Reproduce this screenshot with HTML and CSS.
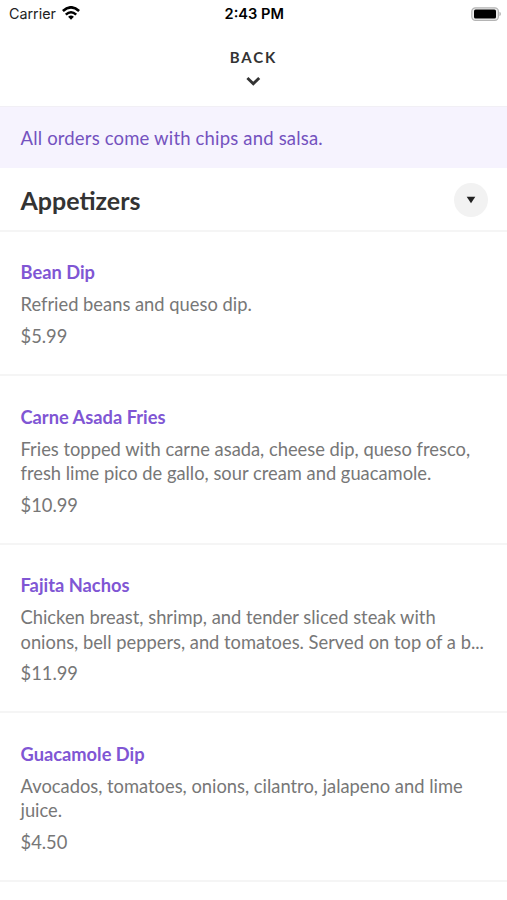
FILE: index.html
```html
<!DOCTYPE html>
<html lang="en">
<head>
<meta charset="utf-8">
<title>Menu</title>
<link rel="stylesheet" href="styles.css">
</head>
<body>
<div class="status">
  <div class="carrier"><span>Carrier</span>
    <svg class="wifi" viewBox="0 0 18 14" width="18" height="14"><g fill="none" stroke="#000" stroke-width="2.6"><path d="M.9 5Q9-2.4 17.1 5"/><path d="M3.8 8.6Q9 3.9 14.2 8.6"/></g><path d="M6.1 10.8Q9 8.3 11.9 10.8L9 13.8Z"/></svg>
  </div>
  <div class="time">2:43 PM</div>
  <svg class="battery" viewBox="0 0 30 14" width="30" height="14"><rect x=".8" y=".8" width="26.6" height="12.6" rx="3.6" fill="#eee" stroke="#b4b4b4" stroke-width="1.2"/><rect x="3" y="2.6" width="22" height="9" rx="1.6"/><path d="M28.4 4.8Q30 5.4 30 7T28.4 9.2Z" fill="#b8b8b8"/></svg>
</div>
<header class="back"><span>BACK</span>
  <svg width="16" height="10" viewBox="0 0 16 10"><path d="M1.4 2L7.3 7.7L13.2 2" fill="none" stroke="#333" stroke-width="2.9"/></svg>
</header>
<div class="notice">All orders come with chips and salsa.</div>
<div class="section"><h1>Appetizers</h1>
  <div class="toggle"><svg width="10" height="8" viewBox="0 0 10 8"><path d="M.7 .8H9.3L5 7.3Z" fill="#222"/></svg></div>
</div>
<main>
  <article class="item short"><h2>Bean Dip</h2><p>Refried beans and queso dip.</p><div class="price">$5.99</div></article>
  <article class="item"><h2>Carne Asada Fries</h2><p>Fries topped with carne asada, cheese dip, queso fresco,<br>fresh lime pico de gallo, sour cream and guacamole.</p><div class="price">$10.99</div></article>
  <article class="item"><h2>Fajita Nachos</h2><p>Chicken breast, shrimp, and tender sliced steak with<br>onions, bell peppers, and tomatoes. Served on top of a b...</p><div class="price">$11.99</div></article>
  <article class="item"><h2>Guacamole Dip</h2><p>Avocados, tomatoes, onions, cilantro, jalapeno and lime<br>juice.</p><div class="price">$4.50</div></article>
</main>
</body>
</html>
```

FILE: styles.css
```css
* { box-sizing: border-box; }
body { margin: 0; width: 507px; height: 900px; overflow: hidden; background: #fff; font-family: Lato, sans-serif; color: #777; }
svg { display: block; }
h1, h2, p { margin: 0; }
.status { height: 27px; padding: 0 6.5px 0 9px; display: grid; grid-template-columns: 1fr auto 1fr; align-items: center; color: #000; font-family: Inter, sans-serif; font-size: 14.3px; }
.carrier { display: flex; gap: 6px; align-items: center; color: #222; }
.wifi { margin-top: -1px; }
.time { font-size: 14.6px; font-weight: 600; margin-left: -1px; }
.battery { justify-self: end; }
.back { height: 80px; padding-top: 20px; display: flex; flex-direction: column; align-items: center; gap: 9px; border-bottom: 1px solid #f1eff5; color: #333; font-size: 15px; line-height: 20px; font-weight: 700; letter-spacing: 1.9px; }
.notice { height: 61px; padding-left: 20.5px; line-height: 63px; background: #f6f3fe; color: #7452bf; font-size: 18.5px; letter-spacing: .17px; }
.section { height: 64px; padding: 1px 19.5px 0 20.5px; display: flex; justify-content: space-between; align-items: center; border-bottom: 2px solid #f5f5f5; }
h1 { color: #333; font-size: 25px; font-weight: 700; }
.toggle { width: 34px; height: 34px; border-radius: 50%; background: #f2f2f2; display: grid; place-items: center; }
.item { height: 168.7px; padding: 28.6px 20px 0 20.5px; border-bottom: 2px solid #f5f5f5; white-space: nowrap; font-size: 18.34px; line-height: 24.5px; }
.short { height: 144px; padding-top: 28px; }
h2 { margin-bottom: 8px; color: #8056d4; font-size: 18.3px; line-height: 24px; font-weight: 700; }
.price { margin-top: 7px; }
```
